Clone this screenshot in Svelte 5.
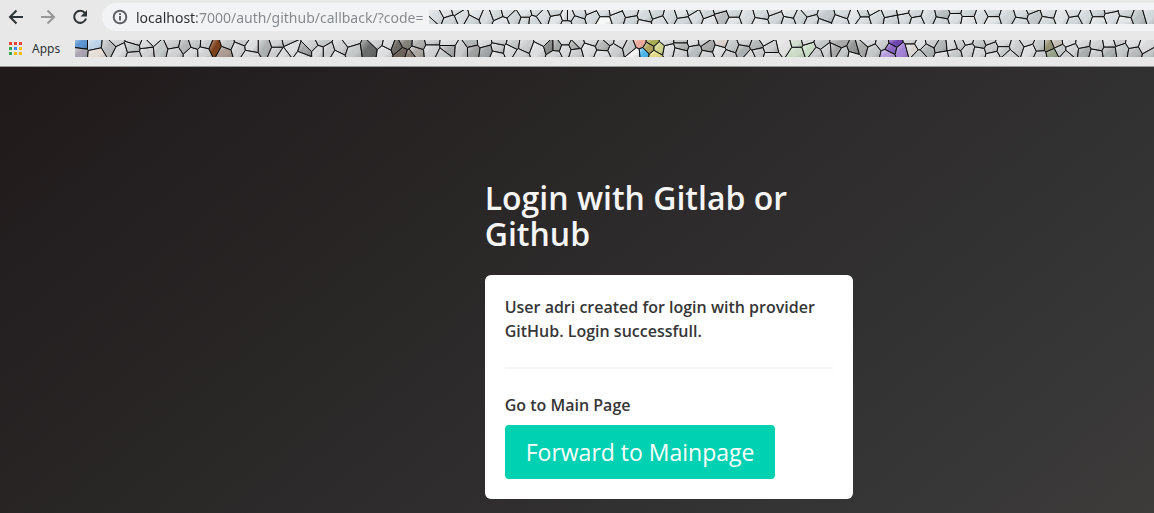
<script>
  // Seeds are [x, y, colour?] in thirds of a pixel, grouped by the offset of each run.
  const bookmarkRuns = [
    { at: 0, top: 120, seeds: [[243,133,'#5f95d0'],[240,157,'#aaa4b0'],[282,133,'#bed2e8'],[288,162,'#e6dcd6'],[328,138,'#b8babb'],[345,120],[362,155],[405,120],[398,144],[400,168],[442,152],[455,120],[440,135],[480,148],[520,130],[525,158],[555,138,'#b4b6b8'],[575,160],[585,128],[618,130],[612,158],[645,142,'#7d421d'],[672,157,'#aa9b93'],[682,130],[725,120],[715,145],[755,140],[750,168],[795,140,'#aeb1b1'],[830,155],[830,128]] },
    { at: 840, top: 120, seeds: [[35,142],[5,165],[25,120],[75,155,'#a0a4a4'],[95,135],[70,168],[115,155],[125,120],[145,155],[183,143],[170,170],[210,122],[220,155],[268,148,'#6a6c6b'],[290,125],[315,155],[326,133],[350,142,'#6d6964'],[378,128,'#85827c'],[365,160,'#6b625b'],[407,155,'#aaa6a2'],[415,130,'#b0b0ae'],[390,168,'#817970'],[455,120],[455,150],[505,126],[505,147,'#a5a8a8'],[490,167],[545,150],[575,128,'#b4b7b7'],[580,150,'#9da09f'],[610,125],[618,155,'#a1a4a6'],[655,145],[660,120],[650,168],[690,150],[700,130],[735,135],[720,168],[775,150],[790,120],[810,140,'#888b8a'],[828,140,'#a6aaa8'],[825,165],[855,120],[855,150],[885,135,'#afb2b0']] },
    { at: 1680, top: 120, seeds: [[48,160],[50,130],[85,150],[95,118],[130,135,'#b7b9b8'],[165,150],[145,118],[128,168],[180,125],[210,140],[240,128,'#edaa9c'],[228,162,'#f3f3f3'],[250,160,'#4ab3eb'],[266,144,'#b2a45f'],[278,123,'#a8ad55'],[298,145,'#d1d38b'],[285,168,'#e0da8a'],[325,150],[318,120],[365,120],[365,138,'#b3b3b3'],[360,158],[400,123],[405,152,'#b8bdc0'],[445,140,'#aaa'],[430,118],[440,168],[478,152],[485,126,'#d9d2cf'],[515,138],[505,168],[555,122],[550,152,'#aaadaf'],[570,170],[590,135,'#b5b8b8'],[595,158],[630,145],[615,118],[630,170],[675,135,'#e1e1e1'],[710,126,'#d2ddd2'],[710,158,'#cbdbc7'],[748,145,'#c8dcc5'],[740,118],[785,130],[770,162],[800,150],[835,126,'#aaa'],[825,148,'#a6a6a6'],[850,163],[885,150,'#929594']] },
    { at: 2565, top: 120, seeds: [[18,145,'#a8aaaa'],[-5,168],[40,120],[55,155],[85,130],[118,126,'#6f48af'],[108,145,'#8b67c2'],[98,165,'#b39bdc'],[140,153,'#a282d5'],[170,145,'#d8d5d2'],[170,118],[195,130],[215,150,'#b0b4b4'],[195,169],[230,122],[260,140,'#b1b5b5'],[265,170],[290,137],[295,162],[315,128],[342,150],[335,118],[370,157],[375,128],[410,145],[400,118],[415,169],[445,128],[445,152],[485,140],[460,169],[525,153],[515,120],[555,138],[557,168],[582,138,'#939174'],[592,162,'#96a089'],[605,128,'#c6c0b8'],[615,150],[635,168],[650,150],[640,123],[685,130],[690,155,'#a9adad'],[720,163],[725,135],[765,128],[765,155,'#adb0b1'],[800,150],[790,120],[840,157,'#b8bbbb'],[835,128],[870,140],[885,167]] }
  ];
  const addressRuns = [
    { at: 840, top: 30, seeds: [[470,50],[450,72],[500,34],[510,65],[545,50],[530,26],[590,38],[575,67],[618,50],[650,38],[665,72],[705,56],[680,30],[735,66],[735,37],[760,68],[790,48],[770,28],[830,60],[825,32],[865,50],[860,74]] },
    { at: 1680, top: 30, seeds: [[20,50],[50,66],[60,35],[100,50],[90,26],[130,67,'#f5f6f6'],[130,33],[175,52],[165,26],[215,64],[210,36],[255,50],[250,74],[290,37],[300,67],[330,48],[365,36],[370,70],[410,50],[395,25],[450,65],[440,37],[487,50,'#b9bcbe'],[480,24],[520,67],[520,36],[562,52],[605,40],[600,71],[650,55],[640,28],[685,66],[690,38],[720,52],[745,30],[755,68],[800,48,'#c4c9cd'],[790,76],[840,65],[850,36]] },
    { at: 2565, top: 30, seeds: [[0,48],[25,36],[25,66],[65,53],[50,26],[110,62],[105,36],[150,55],[145,28],[180,36],[185,66],[220,50],[265,40,'#babfc2'],[260,68],[300,55],[300,26],[340,63],[340,36],[380,50],[410,34],[410,66],[460,50],[500,38],[495,70],[540,50,'#c3c8ca'],[530,25],[580,37],[575,67],[620,50],[660,66],[655,33],[690,50],[730,65],[730,35],[770,50],[765,25],[810,65],[815,36],[850,50,'#bcc1c3'],[885,40]] }
  ];

  const stoneGreys = ['#cfd1d2', '#c5c8c8', '#dddedf', '#caccce', '#d7d9da'];
  const paleGreys = ['#d9dde0', '#d0d5d8', '#e1e4e6', '#d4d9dc'];
  const bleed = 6;

  function stones(runs, start, width, height, greys) {
    const points = runs.flatMap((run) =>
      run.seeds.map(([x, y, colour]) => ({ x: x + run.at - start, y: y - run.top, colour }))
    );
    return points.map((p, i) => {
      const left = Math.max(-bleed, p.x - 90);
      const right = Math.min(width + bleed, p.x + 90);
      let shape = [[left, -bleed], [right, -bleed], [right, height + bleed], [left, height + bleed]];
      for (const q of points) {
        if (q === p || Math.abs(q.x - p.x) > 180) continue;
        const dx = q.x - p.x;
        const dy = q.y - p.y;
        const limit = (q.x * q.x + q.y * q.y - p.x * p.x - p.y * p.y) / 2;
        const side = ([x, y]) => x * dx + y * dy - limit;
        const next = [];
        shape.forEach((a, k) => {
          const b = shape[(k + 1) % shape.length];
          const sa = side(a);
          const sb = side(b);
          if (sa <= 0) next.push(a);
          if (sa * sb < 0) {
            const t = sa / (sa - sb);
            next.push([a[0] + t * (b[0] - a[0]), a[1] + t * (b[1] - a[1])]);
          }
        });
        shape = next;
      }
      return {
        points: shape.map(([x, y]) => `${x.toFixed(1)},${y.toFixed(1)}`).join(' '),
        fill: p.colour ?? greys[(i * 7) % greys.length]
      };
    });
  }

  const strips = {
    address: { width: 2175, height: 42, stones: stones(addressRuns, 1287, 2175, 42, paleGreys) },
    bookmarks: { width: 3237, height: 51, stones: stones(bookmarkRuns, 225, 3237, 51, stoneGreys) }
  };
  const apps = ['#ea4335', '#ea4335', '#ea4335', '#34a853', '#4285f4', '#fbbc05', '#34a853', '#fbbc05', '#fbbc05'];
</script>

{#snippet strip(name)}
  <svg class="strip {name}-strip" viewBox="0 0 {strips[name].width} {strips[name].height}" preserveAspectRatio="xMinYMin slice" aria-hidden="true">
    <defs>
      <linearGradient id="bevel-{name}" x1="0" y1="0" x2="1" y2="1">
        <stop offset="0" stop-color="#fff" stop-opacity="0.6" />
        <stop offset="0.45" stop-color="#fff" stop-opacity="0" />
        <stop offset="0.6" stop-color="#000" stop-opacity="0" />
        <stop offset="1" stop-color="#000" stop-opacity="0.2" />
      </linearGradient>
    </defs>
    {#each strips[name].stones as stone}
      <polygon points={stone.points} fill={stone.fill} />
      <polygon points={stone.points} fill="url(#bevel-{name})" stroke="#0c0c0c" stroke-width="3" stroke-linejoin="round" />
    {/each}
  </svg>
{/snippet}

<div class="page">
  <header>
    <div class="toolbar">
      <button aria-label="Back">
        <svg viewBox="0 0 16 16"><path d="M15 8H2M8.500 1.500 2 8l6.500 6.500" /></svg>
      </button>
      <button class="muted" aria-label="Forward">
        <svg viewBox="0 0 16 16"><path d="M1 8h13M7.500 1.500 14 8l-6.500 6.500" /></svg>
      </button>
      <button aria-label="Reload">
        <svg viewBox="0 0 16 16"><path d="M13 4.200A6 6 0 1 0 14 9.500" /><path class="solid" d="M15 1v6.500H8.500z" /></svg>
      </button>
      <div class="address">
        <svg class="info" viewBox="0 0 16 16" aria-hidden="true"><circle cx="8" cy="8" r="6.300" /><path d="M8 7v4.500M8 4.200v1.700" /></svg>
        <input aria-label="Address" value="localhost:7000/auth/github/callback/?code=" spellcheck="false" />
        {@render strip('address')}
      </div>
    </div>
    <nav aria-label="Bookmarks">
      <button class="apps">
        <svg viewBox="0 0 13 13" aria-hidden="true">
          {#each apps as colour, i}
            <rect x={(i % 3) * 5} y={Math.floor(i / 3) * 5} width="3" height="3" fill={colour} />
          {/each}
        </svg>
        Apps
      </button>
      {@render strip('bookmarks')}
    </nav>
  </header>

  <main>
    <section>
      <h1>Login with Gitlab or Github</h1>
      <div class="box">
        <p>User adri created for login with provider GitHub. Login successfull.</p>
        <hr />
        <p>Go to Main Page</p>
        <a class="forward" href="#main">Forward to Mainpage</a>
      </div>
    </section>
  </main>
</div>

<style>
  :global(body) {
    margin: 0;
  }
  .page {
    min-height: 100vh;
    display: flex;
    flex-direction: column;
    font-family: "Noto Sans", sans-serif;
  }
  header {
    background: #e8e8e8;
    border-bottom: 1px solid #979797;
    overflow: hidden;
  }
  button {
    border: 0;
    padding: 0;
    background: none;
    color: #2e3436;
    font: inherit;
    display: flex;
    align-items: center;
    flex-shrink: 0;
  }
  .toolbar {
    display: flex;
    align-items: center;
    gap: 16px;
    padding: 3px 0 0 8px;
  }
  .toolbar button svg {
    width: 16px;
    height: 16px;
    fill: none;
    stroke: currentColor;
    stroke-width: 2;
  }
  .toolbar .muted {
    color: #979797;
  }
  .toolbar button .solid {
    fill: currentColor;
    stroke: none;
  }
  .address {
    flex: 1;
    min-width: 0;
    height: 28px;
    margin-left: -2px;
    padding-left: 10px;
    display: flex;
    align-items: center;
    background: #f1f3f4;
    border-radius: 14px 0 0 14px;
  }
  .info {
    width: 16px;
    height: 16px;
    margin-right: 8px;
    flex-shrink: 0;
    fill: none;
    stroke: #5f6368;
    stroke-width: 2;
  }
  input {
    width: 293px;
    height: 28px;
    box-sizing: border-box;
    flex-shrink: 0;
    border: 0;
    padding: 0;
    outline: 0;
    font-family: inherit;
    font-size: 14px;
    color: #84888c;
    background: linear-gradient(90deg, #2b2f33 61px, #84888c 61px);
    background-clip: text;
    -webkit-background-clip: text;
    -webkit-text-fill-color: transparent;
  }
  .strip {
    display: block;
    flex: 1;
    min-width: 0;
  }
  .address-strip {
    height: 14px;
  }
  .bookmarks-strip {
    height: 17px;
  }
  nav {
    height: 35px;
    display: flex;
    align-items: center;
    gap: 15px;
    padding-left: 9px;
  }
  .apps {
    gap: 10px;
    font-size: 12px;
  }
  .apps svg {
    width: 13px;
    height: 13px;
  }
  main {
    flex: 1;
    padding: 113px 0 14px 42%;
    background: linear-gradient(141deg, #1f191a 0%, #363636 71%, #46403f 100%) 0 0 / 116% 122% no-repeat;
  }
  section {
    max-width: 368px;
    font-family: "Open Sans", sans-serif;
    color: #363636;
  }
  h1 {
    margin: 0 0 23px;
    font-size: 32px;
    line-height: 36px;
    font-weight: 600;
    color: #f5f5f5;
  }
  .box {
    padding: 20px;
    background: #fff;
    border-radius: 6px;
  }
  p {
    margin: 0;
    font-size: 16px;
    line-height: 24px;
    font-weight: 600;
  }
  hr {
    height: 2px;
    margin: 24px 0;
    border: 0;
    background: #f5f5f5;
  }
  .forward {
    display: inline-block;
    margin-top: 8px;
    padding: 0 21px;
    border-radius: 4px;
    background: #00d1b2;
    color: #fff;
    font-size: 23px;
    line-height: 54px;
    text-decoration: none;
    vertical-align: top;
  }
</style>
